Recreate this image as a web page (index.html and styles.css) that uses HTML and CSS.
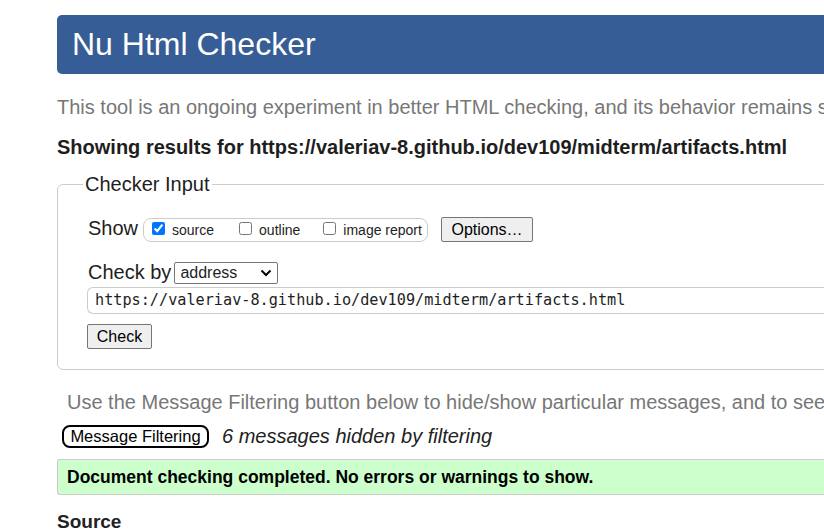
FILE: index.html
```html
<!DOCTYPE html>
<html lang="en">
<head>
<meta charset="utf-8">
<title>Nu Html Checker</title>
<link rel="stylesheet" href="styles.css">
</head>
<body>
<div class="page">
  <h1 class="banner">Nu Html Checker</h1>
  <p class="intro">This tool is an ongoing experiment in better HTML checking, and its behavior remains subject to change</p>
  <p class="result-for">Showing results for https://valeriav-8.github.io/dev109/midterm/artifacts.html</p>
  <fieldset class="input-box">
    <legend>Checker Input</legend>
    <div class="row show-row">
      <span class="lbl">Show</span>
      <span class="checks">
        <label class="chk"><input type="checkbox" checked> source</label>
        <label class="chk"><input type="checkbox"> outline</label>
        <label class="chk"><input type="checkbox"> image report</label>
      </span>
      <button class="btn options">Options…</button>
    </div>
    <div class="row by-row">
      <span class="lbl">Check by</span>
      <span class="select">address<svg class="chev" width="12" height="8" viewBox="0 0 12 8"><path d="M1.5 1.5 L6 6 L10.5 1.5" fill="none" stroke="#000" stroke-width="2"/></svg></span>
    </div>
    <div class="url">https://valeriav-8.github.io/dev109/midterm/artifacts.html</div>
    <button class="btn check">Check</button>
  </fieldset>
  <p class="filter-note">Use the Message Filtering button below to hide/show particular messages, and to see total counts of errors and warnings.</p>
  <div class="filter-row">
    <button class="filter-btn">Message Filtering</button>
    <em class="hidden-count">6 messages hidden by filtering</em>
  </div>
  <div class="success">Document checking completed. No errors or warnings to show.</div>
  <h2 class="source">Source</h2>
</div>
</body>
</html>
```
FILE: styles.css
```css
html, body {
  margin: 0;
  padding: 0;
  overflow: hidden;
  background: #fff;
}
body {
  font-family: "Liberation Sans", Arial, sans-serif;
  color: #1e1e1e;
}
.page {
  width: 1100px;
  padding: 15px 0 0 57px;
}
.banner {
  margin: 0;
  height: 59px;
  line-height: 59px;
  padding-left: 15px;
  background: #365d95;
  color: #fff;
  font-weight: normal;
  font-size: 32px;
  border-radius: 5px 0 0 5px;
}
.intro {
  margin: 21px 0 0;
  font-size: 20px;
  line-height: 24px;
  color: #777;
  white-space: nowrap;
}
.result-for {
  margin: 16px 0 0;
  font-size: 20px;
  line-height: 24px;
  font-weight: bold;
  white-space: nowrap;
}
.input-box {
  margin: 13px 0 0;
  padding: 21px 0 20px 29px;
  border: 1px solid #ccc;
  border-radius: 6px 0 0 6px;
  min-width: 0;
}
.input-box legend {
  font-size: 20px;
  line-height: 24px;
  padding: 0 2px;
  margin-left: -4px;
}
.row {
  display: flex;
  align-items: center;
}
.lbl {
  font-size: 20px;
  line-height: 24px;
}
.show-row {
  height: 25px;
}
.show-row .lbl {
  margin: -3px 5px 0 1px;
}
.checks {
  display: flex;
  align-items: center;
  box-sizing: border-box;
  width: 285px;
  height: 24px;
  border: 1px solid #ccc;
  border-radius: 8px;
  padding-left: 8px;
  gap: 13px;
}
.chk {
  display: flex;
  align-items: center;
  font-size: 14px;
  line-height: 16px;
  padding-top: 1px;
}
.chk:nth-child(2) {
  margin-left: 12px;
}
.chk:nth-child(3) {
  margin-left: 10px;
}
.chk input {
  width: 13px;
  height: 13px;
  margin: -4px 7px 0 0;
  accent-color: #0075ff;
}
.btn {
  font-family: "Liberation Sans", Arial, sans-serif;
  font-size: 16px;
  color: #000;
  background: #efefef;
  border: 1px solid #767676;
  border-radius: 2px;
  box-sizing: border-box;
  padding: 0;
  height: 25px;
}
.options {
  width: 92px;
  margin-left: 13px;
}
.by-row {
  margin-top: 18px;
  height: 24px;
}
.by-row .lbl {
  margin-left: 1px;
  margin-right: 3px;
}
.select {
  display: flex;
  align-items: center;
  justify-content: space-between;
  box-sizing: border-box;
  width: 104px;
  height: 22px;
  border: 1px solid #767676;
  border-radius: 2px;
  padding: 0 5px 0 5px;
  font-size: 16px;
  margin-top: 2px;
}
.url {
  margin-top: 3px;
  box-sizing: border-box;
  height: 27px;
  border: 1px solid #ccc;
  border-right: 0;
  border-radius: 6px 0 0 6px;
  padding-left: 7px;
  font-family: "DejaVu Sans Mono", "Liberation Mono", monospace;
  font-size: 15.2px;
  line-height: 25px;
  white-space: nowrap;
}
.check {
  display: block;
  margin-top: 10px;
  width: 65px;
}
.filter-note {
  margin: 20px 0 0 10px;
  font-size: 20px;
  line-height: 24px;
  color: #777;
  white-space: nowrap;
}
.filter-row {
  display: flex;
  align-items: center;
  margin: 11px 0 0 5px;
  height: 23px;
}
.filter-btn {
  font-family: "Liberation Sans", Arial, sans-serif;
  font-size: 16.5px;
  color: #000;
  background: #fff;
  border: 2px solid #000;
  border-radius: 8px;
  box-sizing: border-box;
  width: 147px;
  height: 23px;
  padding: 0;
}
.hidden-count {
  margin-left: 13px;
  font-size: 20px;
  color: #222;
}
.success {
  margin-top: 11px;
  box-sizing: border-box;
  height: 36px;
  line-height: 34px;
  background: #ccffcc;
  border: 1px solid #ccc;
  border-right: 0;
  border-radius: 3px 0 0 3px;
  padding-left: 9px;
  font-weight: bold;
  font-size: 17.5px;
  color: #000;
}
.source {
  margin: 15px 0 0;
  font-size: 19px;
  line-height: 24px;
  color: #222;
}
```
